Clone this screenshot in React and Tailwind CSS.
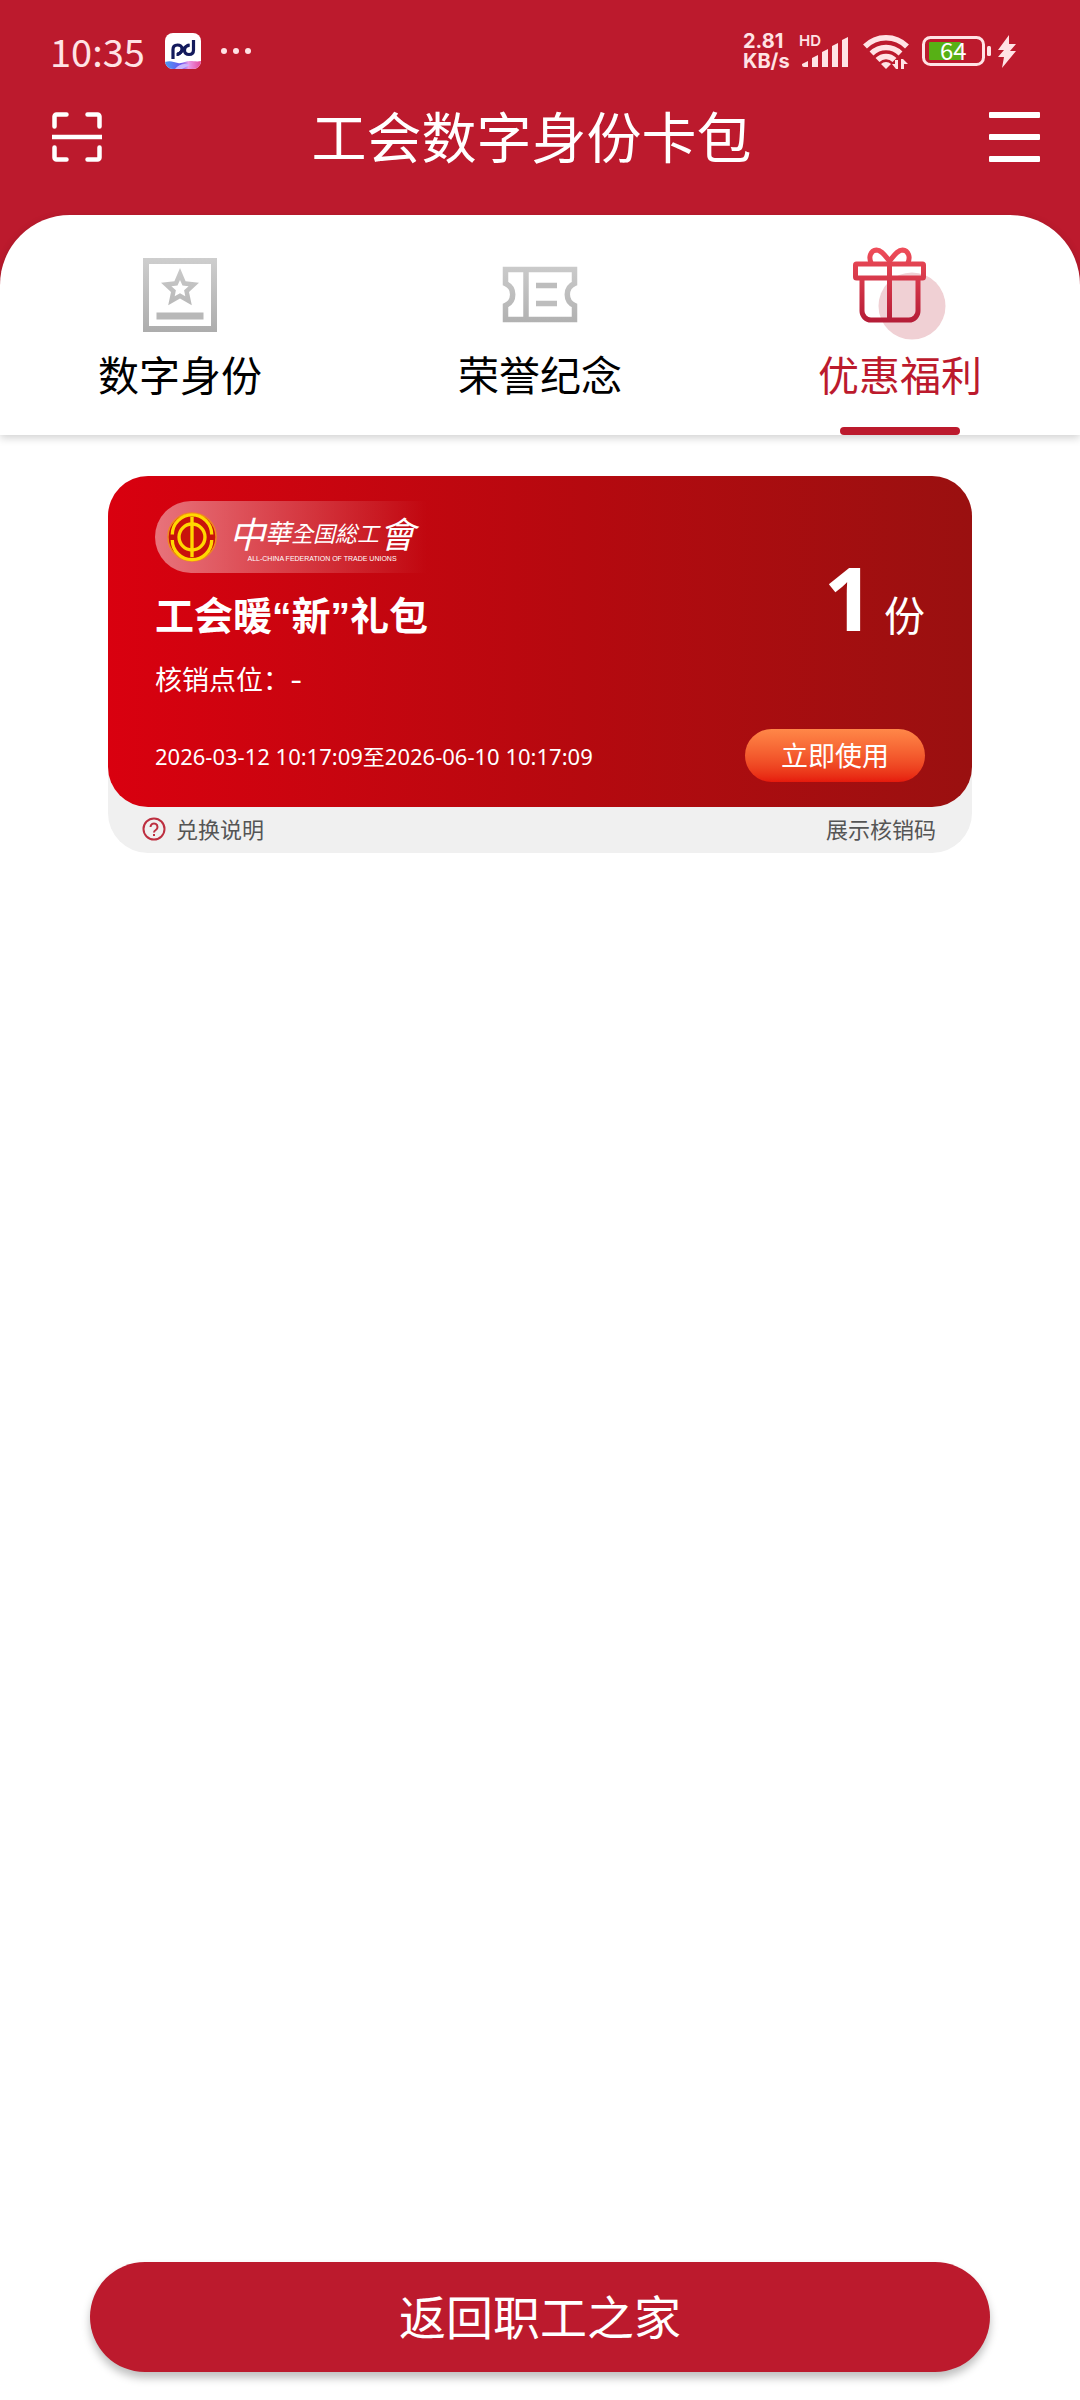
import React from "react";

const CJK = "font-['Noto_Sans','Noto_Sans_CJK_SC',sans-serif]";

function AppBadge() {
  return (
    <svg className="h-9 w-9" viewBox="0 0 36 36" aria-hidden="true">
      <defs>
        <clipPath id="badge-clip">
          <rect width="36" height="36" rx="8" />
        </clipPath>
        <linearGradient id="badge-wave" x1="0" x2="1" y1="0" y2="0">
          <stop offset="0" stopColor="#4b9bf4" />
          <stop offset="0.45" stopColor="#6a55ee" />
          <stop offset="0.65" stopColor="#e89be8" />
          <stop offset="1" stopColor="#e8489a" />
        </linearGradient>
      </defs>
      <g clipPath="url(#badge-clip)">
        <rect width="36" height="36" fill="#fff" />
        <path d="M0 29c5-2 9 0 13 1s8-2 12-2 7 1 11 0v9H0z" fill="url(#badge-wave)" />
        <path d="M10 36c4-5 9-6 15-4l-8 4z" fill="#c9b6ff" />
      </g>
      <g fill="none" stroke="#131a5c" strokeWidth="3.2">
        <path d="M8 26V16.500c0-3 2-4.500 4.500-4.500s4.500 1.500 4.500 4-2 5-5 5" />
        <path d="M28.500 7v10c0 3-2 4.500-4.500 4.500s-4.500-1.500-4.500-4 2-5 5-5" />
        <path d="M11.500 21.500c5.500 0 7-9.500 13-9.500" />
      </g>
    </svg>
  );
}

function SignalIcon() {
  return (
    <svg className="h-9 w-[51px] overflow-visible" viewBox="0 0 51 36" aria-hidden="true" fill="#ffe3e5">
      <text x="0" y="13" fontSize="15" fontWeight="600" fontFamily="Inter, sans-serif">HD</text>
      <path d="M3 31l6-3v6H5a2 2 0 0 1-2-2z" />
      <path d="M13 25l6-3v12h-6z" />
      <path d="M23 19l6-3v18h-6z" />
      <path d="M33 13l6-3v24h-6z" />
      <path d="M43 7l6-3v30h-6z" />
    </svg>
  );
}

function WifiIcon() {
  return (
    <svg className="h-9 w-12" viewBox="0 0 48 36" aria-hidden="true">
      <g fill="none" stroke="#ffe3e5" strokeWidth="5.500">
        <path d="M3 13.500a29.500 29.500 0 0 1 42 0" />
        <path d="M9.500 20.500a20.500 20.500 0 0 1 29 0" />
        <path d="M15.500 27a12 12 0 0 1 17 0" />
      </g>
      <path d="M24 36l-5-5a7 7 0 0 1 10 0z" fill="#ffe3e5" />
      <path d="M36 27v9h-2l-4-5h3v-4zM39 36v-10h2l5 5h-4v5z" fill="#ffe3e5" />
    </svg>
  );
}

function BatteryIcon() {
  return (
    <svg className="h-9 w-[96px]" viewBox="0 0 96 36" aria-hidden="true">
      <rect x="1.500" y="4.500" width="60" height="27" rx="7" fill="none" stroke="#ffe3e5" strokeWidth="3" />
      <rect x="7" y="9" width="32" height="18" rx="1" fill="#57b015" />
      <rect x="65" y="13" width="4" height="10" rx="1.500" fill="#ffe3e5" />
      <text x="18" y="27" fontSize="24" fill="#fff" fontFamily="Noto Sans CJK SC, sans-serif">64</text>
      <path d="M87 2L76 17h6l-6 7h6l-2 11 14-17h-6l6-7h-7z" fill="#ffe3e5" />
    </svg>
  );
}

function StatusBar() {
  return (
    <div className="flex h-[102px] items-center justify-between pl-[50px] pr-[62px] text-[#ffe3e5]">
      <div className="flex items-center gap-5">
        <time className="font-['Noto_Sans_CJK_SC',sans-serif] text-[38px] leading-10">10:35</time>
        <AppBadge />
        <svg className="h-9 w-8" viewBox="0 0 32 36" fill="#ffe3e5" aria-hidden="true">
          <circle cx="3" cy="18" r="3" />
          <circle cx="15" cy="18" r="3" />
          <circle cx="27" cy="18" r="3" />
        </svg>
      </div>
      <div className="flex items-center">
        <div className="w-14 font-[Inter,sans-serif] text-[20px] font-bold leading-5">
          <div>2.81</div>
          <div>KB/s</div>
        </div>
        <SignalIcon />
        <span className="w-3" />
        <WifiIcon />
        <span className="w-3" />
        <BatteryIcon />
      </div>
    </div>
  );
}

function TitleBar() {
  return (
    <div className="flex h-[70px] items-center justify-between pl-[52px] pr-10 text-white">
      <button type="button" aria-label="扫一扫">
        <svg className="h-[50px] w-[50px]" viewBox="0 0 50 50" fill="none" stroke="currentColor" strokeWidth="4.500" strokeLinecap="round" strokeLinejoin="round">
          <path d="M2.500 14.500V4.500a2 2 0 0 1 2-2H14.500M35.500 2.500h10a2 2 0 0 1 2 2v10M47.500 35.500v10a2 2 0 0 1-2 2h-10M14.500 47.500h-10a2 2 0 0 1-2-2v-10" />
          <path d="M0 25h50" strokeLinecap="butt" />
        </svg>
      </button>
      <h1 className="mr-7 text-[55px] font-normal leading-[64px]">工会数字身份卡包</h1>
      <button type="button" aria-label="菜单" className="flex w-[51px] flex-col gap-4">
        <span className="h-[6px] rounded-[1px] bg-white" />
        <span className="h-[6px] rounded-[1px] bg-white" />
        <span className="h-[6px] rounded-[1px] bg-white" />
      </button>
    </div>
  );
}

function GreyGradient({ id }) {
  return (
    <linearGradient id={id} gradientUnits="userSpaceOnUse" x1="0" y1="0" x2="0" y2="76">
      <stop offset="0" stopColor="#cfcfcf" />
      <stop offset="1" stopColor="#adadad" />
    </linearGradient>
  );
}

function IdentityIcon() {
  return (
    <svg className="h-[76px] w-[76px]" viewBox="0 0 76 76" fill="none" aria-hidden="true">
      <defs><GreyGradient id="grey-id" /></defs>
      <rect x="4" y="5" width="68" height="68" stroke="url(#grey-id)" strokeWidth="6" />
      <path
        fill="url(#grey-id)"
        fillRule="evenodd"
        d="M38 12L43.600 25.300 57 26.800 47 35.900 49.800 49.200 38 42.500 26.200 49.200 29 35.900 19 26.800 32.400 25.300zM38 24L35.500 29.500 29.400 30.200 33.900 34.300 32.700 40.300 38 37.300 43.300 40.300 42.100 34.300 46.600 30.200 40.500 29.500z"
      />
      <path d="M14.500 60h47" stroke="#b8b8b8" strokeWidth="7" />
    </svg>
  );
}

function TicketIcon() {
  return (
    <svg className="h-[76px] w-[76px]" viewBox="0 0 76 76" fill="none" stroke="url(#grey-ticket)" strokeWidth="5.500" aria-hidden="true">
      <defs><GreyGradient id="grey-ticket" /></defs>
      <path d="M3.500 13.500H72.500V27.500a12 12 0 0 0 0 22V63.500H3.500V49.500a12 12 0 0 0 0-22z" />
      <path d="M24 13v50" />
      <path d="M34 29.500h21M34 47.500h21" stroke="#bdbdbd" />
    </svg>
  );
}

function GiftIcon() {
  return (
    <svg className="h-[94px] w-[94px]" viewBox="0 0 94 94" fill="none" aria-hidden="true">
      <defs>
        <linearGradient id="gift-red" gradientUnits="userSpaceOnUse" x1="0" y1="0" x2="0" y2="76">
          <stop offset="0" stopColor="#f04e5a" />
          <stop offset="1" stopColor="#b41c36" />
        </linearGradient>
      </defs>
      <circle cx="59" cy="59" r="33.500" fill="#f0d0d4" />
      <g stroke="url(#gift-red)" strokeWidth="5" strokeLinejoin="round">
        <rect x="2.500" y="17" width="68" height="14" rx="1" />
        <path d="M9 31v33a9 9 0 0 0 9 9h38a9 9 0 0 0 9-9V31" />
        <path d="M36.500 14v59" />
        <path d="M18.500 17c-3.500-7-1-13.500 5-14 5 0 8 5 13 11 5-6 8-11 13-11 6 .5 8.500 7 5 14" />
      </g>
    </svg>
  );
}

function Tab({ icon, label, active }) {
  return (
    <button
      type="button"
      role="tab"
      aria-selected={active}
      className={
        active
          ? "flex flex-1 flex-col items-center text-[#bc1a2d]"
          : "flex flex-1 flex-col items-center text-black"
      }
    >
      <span className="flex h-[94px] items-center">{icon}</span>
      <span className="mt-1.5 text-[41px] leading-[56px]">{label}</span>
      <span className={active ? "mt-auto h-2 w-[120px] rounded-full bg-[#bc1a2d]" : "mt-auto h-2"} />
    </button>
  );
}

function UnionEmblem() {
  return (
    <svg className="h-[50px] w-[50px] shrink-0" viewBox="0 0 52 52" fill="none" aria-hidden="true">
      <circle cx="26" cy="26" r="25" fill="#c8120c" stroke="#f08a1c" strokeWidth="1.500" />
      <g stroke="#ffd800" strokeWidth="3.500">
        <path d="M5.500 23.500a20.500 20.500 0 0 1 41 0M46.500 29a20.500 20.500 0 0 1-41 0" />
        <circle cx="26" cy="26" r="13.500" />
        <path d="M26 5v42" />
      </g>
    </svg>
  );
}

function UnionLogo() {
  return (
    <div className="flex h-[72px] w-[272px] items-center gap-3 rounded-l-full bg-gradient-to-r from-white/45 to-transparent pl-3">
      <UnionEmblem />
      <div className="text-center text-white">
        <div className="flex h-11 items-center whitespace-nowrap font-['Noto_Sans_CJK_TC',sans-serif] italic leading-10">
          <span className="text-[36px]">中</span>
          <span className="text-[26px]">華</span>
          <span className="text-[22px]">全国</span>
          <span className="text-[22px]">総</span>
          <span className="text-[22px]">工</span>
          <span className="text-[36px]">會</span>
        </div>
        <div className="font-['Liberation_Sans',sans-serif] text-[7px] leading-[10px]">
          ALL-CHINA FEDERATION OF TRADE UNIONS
        </div>
      </div>
    </div>
  );
}

function CouponCard() {
  return (
    <article className="mx-auto mt-[41px] w-4/5 rounded-[40px] bg-[#f0f0f0]">
      <div className="flex h-[331px] justify-between rounded-[40px] bg-gradient-to-r from-[#d9000f] via-[#b5090f] via-55% to-[#9a1010] pb-[25px] pl-[47px] pr-[47px] pt-[25px] text-white">
        <div className="flex flex-col items-start">
          <UnionLogo />
          <h2 className="mt-4 font-['Liberation_Sans','Noto_Sans_CJK_SC',sans-serif] text-[39px] font-bold leading-[56px]">工会暖“新”礼包</h2>
          <p className="mt-4 font-[Inter,'Noto_Sans_CJK_SC',sans-serif] text-[27px] leading-10">核销点位：-</p>
          <p className="mb-2.5 mt-auto whitespace-nowrap text-[22px] leading-8">
            2026-03-12 10:17:09至2026-06-10 10:17:09
          </p>
        </div>
        <div className="flex flex-col items-end justify-between">
          <p className="mt-14 flex items-baseline gap-2.5 leading-[80px]">
            <span className="text-[88px] font-bold">1</span>
            <span className="text-[41px]">份</span>
          </p>
          <button type="button" className="h-[53px] w-[180px] rounded-full bg-gradient-to-b from-[#ff8748] to-[#e6190c] text-[27px] leading-10">
            立即使用
          </button>
        </div>
      </div>
      <div className="flex h-[46px] items-start justify-between pl-[34px] pr-9 pt-1.5 text-[22px] leading-8 text-[#555]">
        <button type="button" className="flex items-center gap-2.5">
          <svg className="h-6 w-6" viewBox="0 0 24 24" fill="none" stroke="#bd2f40" strokeWidth="2" aria-hidden="true">
            <circle cx="12" cy="12" r="10.500" />
            <path d="M8.500 10a3.500 3.500 0 1 1 5.300 3c-1.200.7-1.800 1.200-1.800 2.500" />
            <path d="M12 17v2" />
          </svg>
          兑换说明
        </button>
        <button type="button">展示核销码</button>
      </div>
    </article>
  );
}

export default function App() {
  return (
    <div className={`flex min-h-screen flex-col bg-white ${CJK}`}>
      <header className="bg-[#bc1a2d]">
        <StatusBar />
        <TitleBar />
        <nav role="tablist" className="mt-[43px] flex h-[220px] rounded-t-[70px] bg-white pt-8 shadow-[0_3px_8px_rgba(0,0,0,0.18)]">
          <Tab icon={<IdentityIcon />} label="数字身份" active={false} />
          <Tab icon={<TicketIcon />} label="荣誉纪念" active={false} />
          <Tab icon={<GiftIcon />} label="优惠福利" active />
        </nav>
      </header>
      <main>
        <CouponCard />
      </main>
      <footer className="mt-auto px-[90px] pb-7">
        <button type="button" className="h-[110px] w-full rounded-full bg-[#bc1a2d] text-[47px] leading-[64px] text-white shadow-[0_6px_8px_rgba(0,0,0,0.25)]">
          返回职工之家
        </button>
      </footer>
    </div>
  );
}
